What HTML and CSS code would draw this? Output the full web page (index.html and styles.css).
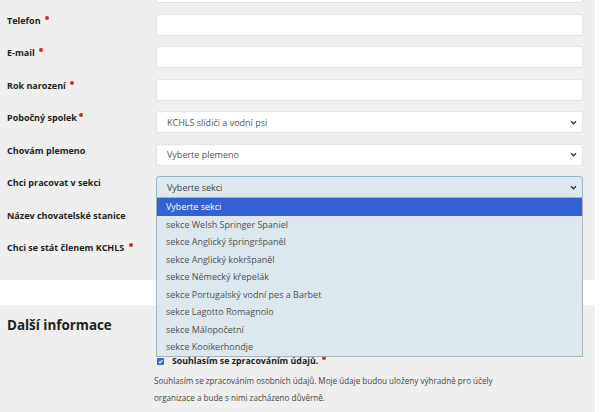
FILE: index.html
```html
<!DOCTYPE html>
<html lang="cs">
<head>
<meta charset="utf-8">
<title>Přihláška</title>
<link rel="stylesheet" href="styles.css">
</head>
<body>
<section class="card first">
  <div class="row top-row">
    <div class="label"></div>
    <div class="field"><div class="input"></div></div>
  </div>
  <div class="row">
    <div class="label">Telefon <span class="req"></span></div>
    <div class="field"><div class="input"></div></div>
  </div>
  <div class="row">
    <div class="label">E-mail <span class="req"></span></div>
    <div class="field"><div class="input"></div></div>
  </div>
  <div class="row">
    <div class="label">Rok narození <span class="req"></span></div>
    <div class="field"><div class="input"></div></div>
  </div>
  <div class="row">
    <div class="label">Pobočný spolek<span class="req tight"></span></div>
    <div class="field"><div class="input select"><span>KCHLS slídiči a vodní psi</span><svg class="chev" viewBox="0 0 8 6" width="7" height="5"><path d="M1 1.5 L4 4.5 L7 1.5" fill="none" stroke="#333" stroke-width="1.6"/></svg></div></div>
  </div>
  <div class="row">
    <div class="label">Chovám plemeno</div>
    <div class="field"><div class="input select"><span>Vyberte plemeno</span><svg class="chev" viewBox="0 0 8 6" width="7" height="5"><path d="M1 1.5 L4 4.5 L7 1.5" fill="none" stroke="#333" stroke-width="1.6"/></svg></div></div>
  </div>
  <div class="row">
    <div class="label">Chci pracovat v sekci</div>
    <div class="field open">
      <div class="input select focused"><span>Vyberte sekci</span><svg class="chev" viewBox="0 0 8 6" width="7" height="5"><path d="M1 1.5 L4 4.5 L7 1.5" fill="none" stroke="#333" stroke-width="1.6"/></svg></div>
      <ul class="dropdown">
        <li class="active">Vyberte sekci</li>
        <li>sekce Welsh Springer Spaniel</li>
        <li>sekce Anglický špringršpaněl</li>
        <li>sekce Anglický kokršpaněl</li>
        <li>sekce Německý křepelák</li>
        <li>sekce Portugalský vodní pes a Barbet</li>
        <li>sekce Lagotto Romagnolo</li>
        <li>sekce Málopočetní</li>
        <li>sekce Kooikerhondje</li>
      </ul>
    </div>
  </div>
  <div class="row">
    <div class="label">Název chovatelské stanice</div>
    <div class="field"><div class="input"></div></div>
  </div>
  <div class="row last">
    <div class="label">Chci se stát členem KCHLS <span class="req"></span></div>
    <div class="field"><div class="input"></div></div>
  </div>
</section>
<section class="card second">
  <h2 class="heading">Další informace</h2>
  <div class="content">
    <div class="check-row">
      <svg class="checkbox" viewBox="0 0 8 8" width="7" height="7"><rect x="0" y="0" width="8" height="8" rx="1.2" fill="#2f6cd8"/><path d="M2 4.2 L3.4 5.6 L6.2 2.4" fill="none" stroke="#fff" stroke-width="1.2"/></svg>
      <span class="check-label">Souhlasím se zpracováním údajů. <span class="req"></span></span>
    </div>
    <p class="note">Souhlasím se zpracováním osobních údajů. Moje údaje budou uloženy výhradně pro účely<br>organizace a bude s nimi zacházeno důvěrně.</p>
  </div>
</section>
</body>
</html>
```

FILE: styles.css
```css
html, body {
  margin: 0;
  padding: 0;
  background: #ffffff;
  font-family: "Open Sans", "Noto Sans", sans-serif;
  color: #222;
  overflow: hidden;
}

.card {
  background: #efefef;
  width: 595px;
  box-sizing: border-box;
  padding: 0 12px 0 7px;
}

.first {
  padding-bottom: 17px;
}

.row {
  display: flex;
  align-items: flex-start;
  margin-bottom: 10.5px;
}

.row.last {
  margin-bottom: 0;
}

.top-row {
  margin-top: -19px;
}

.label {
  width: 149px;
  flex: none;
  font-size: 9px;
  font-weight: 700;
  line-height: 14px;
  color: #1e1e1e;
}

.req {
  display: inline-block;
  width: 4px;
  height: 4px;
  border-radius: 50%;
  background: #c4302b;
  vertical-align: 4px;
  margin-left: 2px;
}

.req.tight {
  margin-left: 2px;
}

.field {
  width: 427px;
  flex: none;
  position: relative;
}

.input {
  height: 22px;
  box-sizing: border-box;
  background: #fff;
  border: 1px solid #e3e3e3;
  border-radius: 2px;
}

.select {
  display: flex;
  align-items: center;
  justify-content: space-between;
  padding: 0 5px 0 10px;
  font-size: 9px;
  color: #555;
}

.chev {
  display: block;
}

.focused {
  background: #dde9ef;
  border-color: #94b7c8;
  border-radius: 3px 3px 0 0;
  color: #444;
}

.dropdown {
  position: absolute;
  top: 22px;
  left: 0;
  width: 427px;
  box-sizing: border-box;
  margin: 0;
  padding: 0;
  list-style: none;
  background: #dce8ee;
  border: 1px solid #a6b3b9;
  border-top: none;
  z-index: 5;
}

.dropdown li {
  height: 17.5px;
  line-height: 17.5px;
  padding-left: 9px;
  font-size: 9px;
  color: #505050;
  white-space: nowrap;
}

.dropdown li.active {
  background: #3462d2;
  color: #fff;
}

.second {
  margin-top: 25px;
  padding-top: 10px;
  padding-bottom: 20px;
}

.heading {
  margin: 0 0 21px 0;
  font-size: 13.4px;
  font-weight: 700;
  line-height: 20px;
  color: #222;
}

.content {
  margin-left: 149px;
}

.check-row {
  display: flex;
  align-items: center;
  height: 10px;
}

.checkbox {
  display: block;
  margin-left: 1px;
  margin-right: 8px;
}

.check-label {
  font-size: 8.8px;
  font-weight: 700;
  line-height: 10px;
  color: #1e1e1e;
}

.note {
  margin: 6px 0 0 -2px;
  font-size: 8.1px;
  line-height: 17px;
  color: #444;
}
```
